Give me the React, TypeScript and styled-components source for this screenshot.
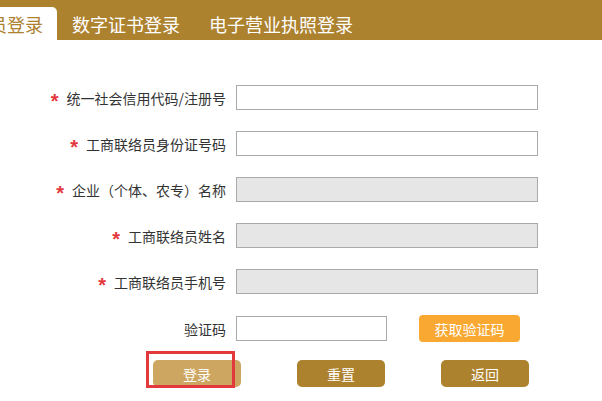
import styled, { createGlobalStyle } from 'styled-components';

const GlobalStyle = createGlobalStyle`
    html, body {
        margin: 0;
        padding: 0;
        background: #fff;
        font-family: "Noto Sans CJK SC", "Liberation Sans", sans-serif;
    }
`;

const gold = '#ad822f';

const Page = styled.div`
    width: 602px;
    height: 401px;
    overflow: hidden;
    background: #fff;
`;

const TabBar = styled.div`
    height: 40px;
    background: ${gold};
    display: flex;
    align-items: flex-end;
    gap: 1px;
    margin-left: -25px;
`;

const Tab = styled.div<{ $active?: boolean }>`
    height: 33px;
    padding: 0 14px;
    display: flex;
    align-items: center;
    font-size: 18px;
    line-height: 18px;
    color: ${(p) => (p.$active ? gold : '#fff')};
    background: ${(p) => (p.$active ? '#fff' : 'transparent')};
    border-radius: 0 5px 0 0;
    white-space: nowrap;
`;

const Form = styled.div`
    padding-top: 45px;
    display: flex;
    flex-direction: column;
    gap: 21px;
`;

const Row = styled.div`
    display: flex;
    align-items: center;
    height: 25px;
`;

const Label = styled.label`
    width: 226px;
    display: flex;
    justify-content: flex-end;
    align-items: center;
    font-size: 14px;
    color: #333;
    margin-right: 10px;
    white-space: nowrap;
`;

const Star = styled.span`
    color: #e4393c;
    font-family: "Liberation Sans", sans-serif;
    font-weight: bold;
    font-size: 20px;
    line-height: 14px;
    margin-right: 8px;
    position: relative;
    top: 3px;
`;

const Input = styled.input<{ $w?: number }>`
    box-sizing: border-box;
    width: ${(p) => p.$w ?? 302}px;
    height: 25px;
    border: 1px solid #aaa;
    background: ${(p) => (p.disabled ? '#e6e6e6' : '#fff')};
    padding: 0 4px;
    margin: 0;
    outline: none;
`;

const CodeButton = styled.button`
    margin-left: 32px;
    width: 101px;
    height: 27px;
    border: none;
    border-radius: 4px;
    background: #f9a832;
    color: #fff;
    font-family: inherit;
    font-size: 14px;
    padding: 0;
`;

const Actions = styled.div`
    display: flex;
    gap: 56px;
    padding-left: 153px;
    margin-top: -2px;
`;

const ActionButton = styled.button<{ $light?: boolean }>`
    width: 88px;
    height: 27px;
    border: none;
    border-radius: 5px;
    background: ${(p) => (p.$light ? '#cda762' : gold)};
    color: #fff;
    font-family: inherit;
    font-size: 14px;
    padding: 0;
`;

const Marked = styled.div`
    position: relative;
`;

const Highlight = styled.span`
    position: absolute;
    left: -7px;
    top: -9px;
    width: 89px;
    height: 37px;
    box-sizing: border-box;
    border: 3px solid #e4393c;
    pointer-events: none;
`;

const fields = [
    { label: '统一社会信用代码/注册号', disabled: false },
    { label: '工商联络员身份证号码', disabled: false },
    { label: '企业（个体、农专）名称', disabled: true },
    { label: '工商联络员姓名', disabled: true },
    { label: '工商联络员手机号', disabled: true },
];

const App = () => {
    return (
        <Page>
            <GlobalStyle />
            <TabBar>
                <Tab $active>员登录</Tab>
                <Tab>数字证书登录</Tab>
                <Tab>电子营业执照登录</Tab>
            </TabBar>
            <Form>
                {fields.map((f) => (
                    <Row key={f.label}>
                        <Label>
                            <Star>*</Star>
                            {f.label}
                        </Label>
                        <Input disabled={f.disabled} />
                    </Row>
                ))}
                <Row style={{ marginTop: 1 }}>
                    <Label>验证码</Label>
                    <Input $w={151} />
                    <CodeButton>获取验证码</CodeButton>
                </Row>
                <Actions>
                    <Marked>
                        <ActionButton $light>登录</ActionButton>
                        <Highlight />
                    </Marked>
                    <ActionButton>重置</ActionButton>
                    <ActionButton>返回</ActionButton>
                </Actions>
            </Form>
        </Page>
    );
};

export default App;
